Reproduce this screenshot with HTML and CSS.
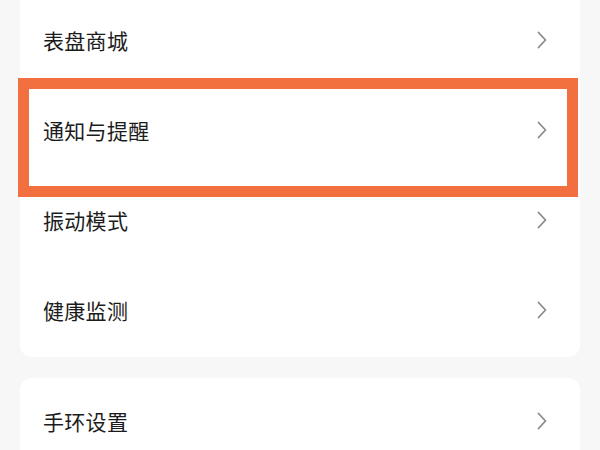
FILE: index.html
```html
<!DOCTYPE html>
<html lang="zh">
<head>
<meta charset="utf-8">
<link rel="stylesheet" href="styles.css">
</head>
<body>
<div class="page">
  <div class="card card-first">
    <div class="row"><span class="label">表盘商城</span><svg class="chev" viewBox="0 0 10 18"><path d="M1.5 1.5 L8.5 9 L1.5 16.5"/></svg></div>
    <div class="row row-hl"><span class="label">通知与提醒</span><svg class="chev" viewBox="0 0 10 18"><path d="M1.5 1.5 L8.5 9 L1.5 16.5"/></svg><div class="highlight"></div></div>
    <div class="row"><span class="label">振动模式</span><svg class="chev" viewBox="0 0 10 18"><path d="M1.5 1.5 L8.5 9 L1.5 16.5"/></svg></div>
    <div class="row"><span class="label">健康监测</span><svg class="chev" viewBox="0 0 10 18"><path d="M1.5 1.5 L8.5 9 L1.5 16.5"/></svg></div>
  </div>
  <div class="card card-second">
    <div class="row"><span class="label">手环设置</span><svg class="chev" viewBox="0 0 10 18"><path d="M1.5 1.5 L8.5 9 L1.5 16.5"/></svg></div>
  </div>
</div>
</body>
</html>
```
FILE: styles.css
```css
html, body {
  margin: 0;
  padding: 0;
  background: #f7f7f7;
  overflow: hidden;
}
.page {
  padding: 0 20px;
  font-family: "Noto Sans CJK SC", "Noto Sans", sans-serif;
}
.card {
  background: #ffffff;
  border-radius: 12px;
}
.card-first {
  margin-top: -15px;
  padding-top: 12px;
}
.card-second {
  margin-top: 21px;
}
.row {
  position: relative;
  box-sizing: border-box;
  height: 90px;
  display: flex;
  align-items: center;
  justify-content: space-between;
  padding: 0 33px 4px 23px;
}
.label {
  font-size: 21px;
  color: #1c1c1c;
  letter-spacing: 0.3px;
}
.chev {
  width: 10px;
  height: 18px;
  fill: none;
  stroke: #8a8a8a;
  stroke-width: 1.8;
  stroke-linecap: round;
  stroke-linejoin: round;
}
.highlight {
  position: absolute;
  top: -9px;
  bottom: -20px;
  left: -2px;
  right: 2px;
  border: 11px solid #f26f3f;
  box-sizing: border-box;
  pointer-events: none;
}
```
